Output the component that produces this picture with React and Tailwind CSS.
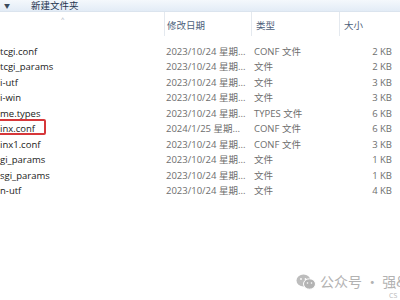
import React from "react";

const files = [
  { name: "tcgi.conf", date: "2023/10/24 星期...", type: "CONF 文件", size: "2 KB" },
  { name: "tcgi_params", date: "2023/10/24 星期...", type: "文件", size: "2 KB" },
  { name: "i-utf", date: "2023/10/24 星期...", type: "文件", size: "3 KB" },
  { name: "i-win", date: "2023/10/24 星期...", type: "文件", size: "3 KB" },
  { name: "me.types", date: "2023/10/24 星期...", type: "TYPES 文件", size: "6 KB" },
  { name: "inx.conf", date: "2024/1/25 星期...", type: "CONF 文件", size: "6 KB", marked: true },
  { name: "inx1.conf", date: "2023/10/24 星期...", type: "CONF 文件", size: "3 KB" },
  { name: "gi_params", date: "2023/10/24 星期...", type: "文件", size: "1 KB" },
  { name: "sgi_params", date: "2023/10/24 星期...", type: "文件", size: "1 KB" },
  { name: "n-utf", date: "2023/10/24 星期...", type: "文件", size: "4 KB" },
];

const font = { fontFamily: '"Open Sans", "Noto Sans CJK SC", sans-serif' };

const WeChat = () => (
  <svg width="20" height="16" viewBox="0 0 20 16">
    <ellipse cx="7.5" cy="6.5" rx="7" ry="6" fill="#bdbdbd" />
    <ellipse cx="13.5" cy="10" rx="6" ry="5.2" fill="#b3b3b3" stroke="#fff" strokeWidth="1" />
    <circle cx="5" cy="5" r="0.9" fill="#fff" />
    <circle cx="9.5" cy="5" r="0.9" fill="#fff" />
    <circle cx="11.5" cy="9" r="0.8" fill="#fff" />
    <circle cx="15.5" cy="9" r="0.8" fill="#fff" />
  </svg>
);

export default function App() {
  return (
    <div
      className="w-[400px] h-[300px] bg-white overflow-hidden relative text-[9.5px]"
      style={font}
    >
      {/* toolbar */}
      <div className="h-[12px] bg-gradient-to-b from-[#f4f8fc] to-[#e3ecf6] border-b border-[#dbe4ee] flex items-center">
        <span className="ml-[4px] text-[6px] text-[#3a4a5c] leading-none">▼</span>
        <span className="ml-[21px] text-[#1e3450] leading-none">新建文件夹</span>
      </div>

      {/* header */}
      <div className="h-[24px] flex items-end text-[#4c607a] relative">
        <span className="absolute left-[61px] top-[4px] text-[6px] text-[#9aa6b4] leading-none">^</span>
        <div className="w-[164px]" />
        <div className="w-[87px] h-full border-l border-[#e4e9ef] pl-[2px] flex items-center pt-[5px]">
          修改日期
        </div>
        <div className="w-[88px] h-full border-l border-[#e4e9ef] pl-[4px] flex items-center pt-[5px]">
          类型
        </div>
        <div className="flex-1 h-full border-l border-[#e4e9ef] pl-[4px] flex items-center pt-[5px]">
          大小
        </div>
      </div>

      {/* rows */}
      <div className="pt-[8px]">
        {files.map((f, i) => (
          <div key={i} className="h-[15.5px] flex items-center">
            <div className="w-[166px] text-[#1a1a1a] relative">
              {f.name}
              {f.marked && (
                <span className="absolute left-[-4px] top-[-3px] w-[50px] h-[16px] border-2 border-[#d6373a] rounded-[2px]" />
              )}
            </div>
            <div className="w-[88px] text-[#6e6e6e] whitespace-nowrap">{f.date}</div>
            <div className="w-[90px] text-[#6e6e6e]">{f.type}</div>
            <div className="w-[48px] text-right text-[#6e6e6e]">{f.size}</div>
          </div>
        ))}
      </div>

      {/* watermark */}
      <div className="absolute left-[296px] top-[271px] flex items-center gap-[4px] text-[#b2b2b2] text-[14px] whitespace-nowrap">
        <WeChat />
        <span style={{ fontFamily: '"Noto Sans CJK SC", sans-serif' }}>公众号 · 强&amp;</span>
      </div>
      <div className="absolute left-[389px] top-[292px] text-[7px] text-[#b8b8b8] leading-none">CS</div>
    </div>
  );
}
